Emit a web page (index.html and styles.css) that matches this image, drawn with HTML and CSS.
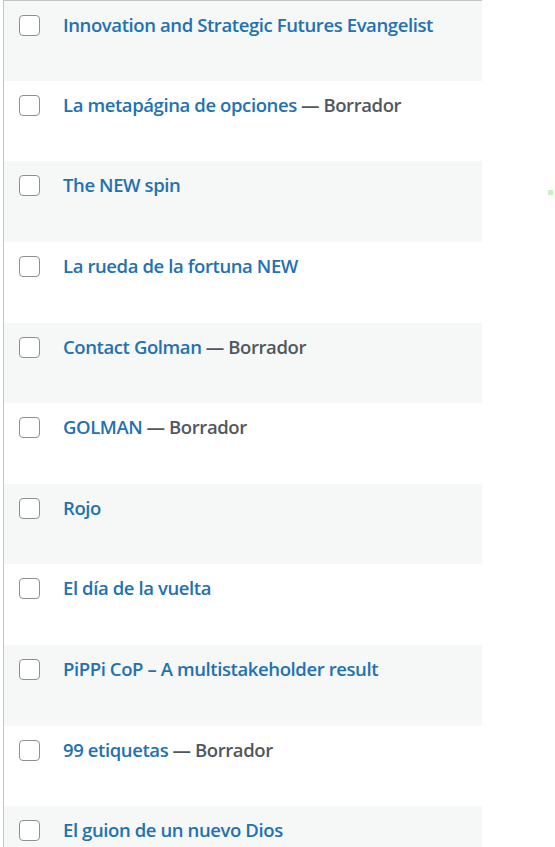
FILE: index.html
```html
<!DOCTYPE html>
<html lang="es">
<head>
    <meta charset="UTF-8">
    <meta name="viewport" content="width=device-width, initial-scale=1.0">
    <title>Páginas</title>
    <link rel="stylesheet" href="styles.css">
</head>
<body>
    <div class="posts-list">
        <div class="post-row striped">
            <input type="checkbox" class="post-check">
            <a class="row-title" href="#">Innovation and Strategic Futures Evangelist</a>
        </div>
        <div class="post-row">
            <input type="checkbox" class="post-check">
            <span><a class="row-title" href="#">La metapágina de opciones</a> <span class="post-state">— Borrador</span></span>
        </div>
        <div class="post-row striped">
            <input type="checkbox" class="post-check">
            <a class="row-title" href="#">The NEW spin</a>
        </div>
        <div class="post-row">
            <input type="checkbox" class="post-check">
            <a class="row-title" href="#">La rueda de la fortuna NEW</a>
        </div>
        <div class="post-row striped">
            <input type="checkbox" class="post-check">
            <span><a class="row-title" href="#">Contact Golman</a> <span class="post-state">— Borrador</span></span>
        </div>
        <div class="post-row">
            <input type="checkbox" class="post-check">
            <span><a class="row-title" href="#">GOLMAN</a> <span class="post-state">— Borrador</span></span>
        </div>
        <div class="post-row striped">
            <input type="checkbox" class="post-check">
            <a class="row-title" href="#">Rojo</a>
        </div>
        <div class="post-row">
            <input type="checkbox" class="post-check">
            <a class="row-title" href="#">El día de la vuelta</a>
        </div>
        <div class="post-row striped">
            <input type="checkbox" class="post-check">
            <a class="row-title" href="#">PiPPi CoP – A multistakeholder result</a>
        </div>
        <div class="post-row">
            <input type="checkbox" class="post-check">
            <span><a class="row-title" href="#">99 etiquetas</a> <span class="post-state">— Borrador</span></span>
        </div>
        <div class="post-row striped">
            <input type="checkbox" class="post-check">
            <a class="row-title" href="#">El guion de un nuevo Dios</a>
        </div>
    </div>
    <div class="stray-dot"></div>
</body>
</html>
```

FILE: styles.css
```css
body {
    margin: 0;
    font-family: "Open Sans", "Noto Sans", sans-serif;
    background: #fff;
}
.posts-list {
    width: 478px;
    margin-left: 3px;
    border-left: 1px solid #c3c4c7;
    border-top: 1px solid #c3c4c7;
}
.post-row {
    box-sizing: border-box;
    height: 80.65px;
    display: flex;
    align-items: flex-start;
    gap: 23px;
    padding: 14px 0 0 15px;
}
.post-row:first-child {
    height: 79.65px;
}
.striped {
    background-color: #f6f7f7;
}
.post-check {
    appearance: none;
    -webkit-appearance: none;
    width: 21px;
    height: 21px;
    margin: 0;
    flex: none;
    border: 1px solid #8c8f94;
    border-radius: 4px;
    background: #fff;
}
.row-title {
    color: #2271b1;
    font-weight: 600;
    font-size: 18.5px;
    line-height: 19px;
    text-decoration: none;
    letter-spacing: -0.4px;
}
.post-state {
    color: #50575e;
    font-weight: 600;
    font-size: 18.5px;
    line-height: 19px;
    letter-spacing: -0.4px;
}
.stray-dot {
    position: absolute;
    left: 548px;
    top: 190px;
    width: 5px;
    height: 5px;
    background: #c6f2c0;
}
```
